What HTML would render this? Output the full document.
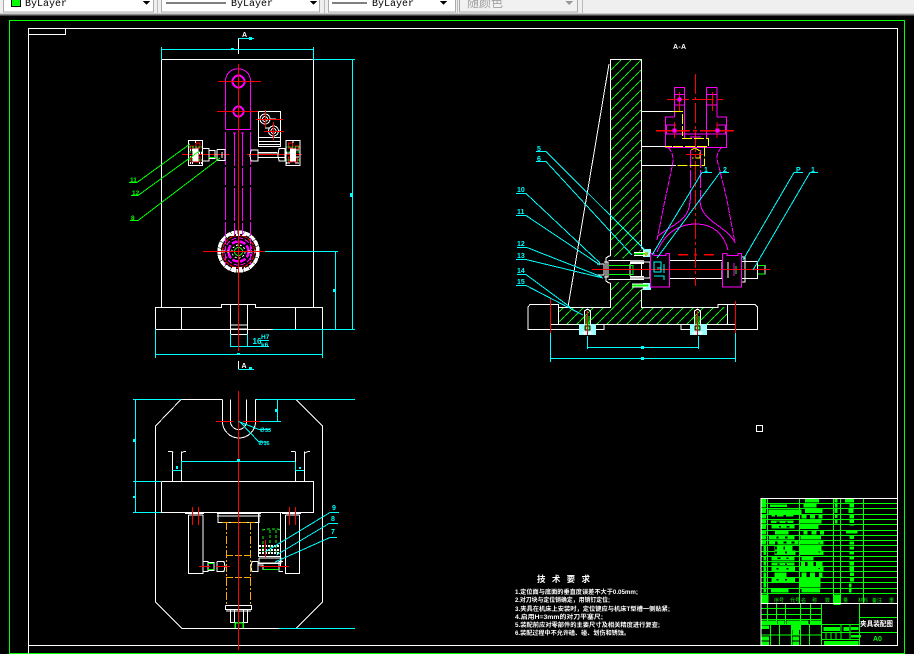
<!DOCTYPE html>
<html><head><meta charset="utf-8"><style>
html,body{margin:0;padding:0;background:#000;width:914px;height:654px;overflow:hidden}
svg{display:block;font-family:"Liberation Sans","Noto Sans CJK SC",sans-serif}
</style></head><body>
<svg width="914" height="654" viewBox="0 0 914 654" shape-rendering="crispEdges" fill="none">
<defs>
<pattern id="h" width="10" height="10" patternUnits="userSpaceOnUse" x="611" y="60"><path d="M0 10L10 0" stroke="#0f0" stroke-width="1" stroke-dasharray="5 1"/></pattern>
<g id="blk"><rect x="188.5" y="140.5" width="14" height="25" stroke="#fff"/>
<path d="M190 146h3v3h-3zM196 143h4v5h-4zM191 158h3v4h-3zM196 157h4v5h-4z" stroke="#f00"/>
<path d="M189 147h13M189 152h13M189 160h13" stroke="#0f0" stroke-dasharray="2 1"/>
<path d="M193 149h5v12h-5z" fill="#fff" stroke="#fff"/><path d="M190 150h3M199 153h3M190 157h3M199 163h3M190 163h3M195 142h2" stroke="#fff" stroke-width="2" stroke-dasharray="1 1"/></g>
</defs>
<!-- toolbar -->
<rect width="914" height="13" fill="#efefef"/>
<rect y="13" width="914" height="1" fill="#c8c8c8"/><rect y="14" width="914" height="1.5" fill="#8a8a8a"/>
<g stroke="#aaa" fill="#fff"><rect x="3.5" y="-2" width="150" height="14"/><rect x="161.5" y="-2" width="158" height="14"/><rect x="328.5" y="-2" width="127" height="14"/></g>
<rect x="459.5" y="-2" width="118" height="14" fill="#f1f1f1" stroke="#aaa"/>
<path d="M157.5 0v13M324.5 0v13M457.5 0v13M582.5 0v13" stroke="#bbb"/>
<rect x="11.5" y="-1" width="9" height="7.5" fill="#0f0" stroke="#000"/>
<path d="M166 3h60M332 3h35" stroke="#000"/>
<g fill="#000" font-family="Liberation Mono" font-size="10"><text x="25" y="6">ByLayer</text><text x="231" y="6">ByLayer</text><text x="372" y="6">ByLayer</text></g>
<text x="467" y="7" font-size="12" fill="#a0a0a0">随颜色</text>
<path d="M143 1h7l-3.500 4zM310 1h7l-3.500 4zM440 1h7l-3.500 4z" fill="#000"/><path d="M565 1h8l-4 4z" fill="#999"/>
<!-- canvas -->
<rect y="15.500" width="914" height="640" fill="#000"/>
<path d="M9.500 654V20.500H904.500V654M9.500 653.500H904.500" stroke="#0f0"/>
<path d="M28.500 654V28.500H897.500V645.500H28.500M28.500 34.500H65.500V28.500" stroke="#fff"/>
<rect x="756.500" y="425.500" width="6" height="6" stroke="#fff"/>

<!-- FRONT VIEW -->
<path d="M161.500 307V59.500H313.500V307M155.500 329.500V307.500H221.500V304.500H255.500V307.500H322.500V329.500H155.500M181.500 307V329M295.500 307V329M230.500 304.500V334.500H247.500V304.500M230.500 325H247.500M230.500 329H247.500" stroke="#fff"/>
<path d="M238.500 38V54M238.500 361V369" stroke="#fff"/>
<g stroke="#0ff">
<path d="M238.500 38.500H254M161.500 47V60M313.500 47V60M161 49.500H314M313 59.500H355M352.500 59V329M273 329.500H355M265 251.500H338M335.500 252V329M155.500 329V358M322.500 329V358M155 354.500H323M230.500 334V347M247.500 334V347M230 346.500H269M238.500 369.500H254"/>
</g>
<g fill="#0ff"><rect x="231" y="48" width="3" height="2"/><rect x="249" y="37" width="3" height="3"/><rect x="350" y="193" width="2" height="4"/><rect x="333" y="289" width="2" height="3"/><rect x="237" y="353" width="3" height="2"/><rect x="249" y="367" width="3" height="3"/></g>
<g fill="#fff" font-size="7" font-weight="bold"><text x="242" y="37">A</text><text x="241.500" y="368">A</text></g>
<g fill="#0ff" font-size="8" font-weight="bold"><text x="252.500" y="344">16</text></g>
<g fill="#0ff" font-size="6.500" font-weight="bold"><text x="261" y="339">H7</text><text x="261" y="347">k6</text></g>
<path d="M260 340.500H269" stroke="#0ff"/>
<!-- link -->
<g stroke="#f0f">
<path d="M225.500 129.500V81.500C225.500 64.500 250.500 64.500 250.500 81.500V129.500H225.500"/>
<path d="M225.500 132V230M234.500 133V230M242.500 133V230M250.500 132V230" stroke-dasharray="33 2 18 2"/>
<path d="M233 133h3M241 133h3" />
<circle cx="238.500" cy="81.500" r="6" stroke-width="2"/><circle cx="238.500" cy="111.500" r="5" stroke-width="2"/>
</g>
<g stroke="#f00"><path d="M238.500 64V351M218 81.500H261M217 111.500H260M182 154.500H229M247 154.500H302M203 251.500H265"/></g>
<!-- small plate -->
<path d="M258.500 111.500H280.500V146.500H258.500V111.500M258.500 137.500H280.500M258.500 141.500H280.500M258.500 144.500H280.500" stroke="#fff"/>
<g stroke="#fff"><circle cx="265" cy="119" r="5" stroke-width="1"/><circle cx="265" cy="119" r="2.500"/><circle cx="273.500" cy="131" r="5"/><circle cx="273.500" cy="131" r="2.500"/><path d="M270 119h6M265 128h5M279 131h2"/></g>
<path d="M256 119.500H283M265.500 110V127M264 131.500H284M273.500 122V140" stroke="#f00"/>
<use href="#blk"/><use href="#blk" transform="translate(488.500 0) scale(-1 1)"/>
<!-- bolts -->
<path d="M202.500 148.500H209V161H202.500M209 150.500H215V158.500H209M215 152V156.500M217 149.500H225V160.500H217V149.500M222 152V158M251 150H258V161H251L250 155.500ZM258 152.500H277M279 148.500H285V161H279L278 155.500Z" stroke="#fff"/>
<path d="M209 157.500H217M262 157.500H279" stroke="#0f0"/>
<path d="M258 157.500H285M258 153H279" stroke="#fff"/>
<!-- round -->
<circle cx="238.500" cy="251.500" r="19.500" stroke="#fff" stroke-width="3.500" stroke-dasharray="6 .5"/>
<circle cx="238.500" cy="251.500" r="16" stroke="#f00" stroke-dasharray="4 1"/>
<circle cx="238.500" cy="251.500" r="13.500" stroke="#f0f" stroke-width="1" stroke-dasharray="5 2"/>
<circle cx="238.500" cy="251.500" r="10" stroke="#f0f" stroke-width="2.500" stroke-dasharray="6 2"/>
<circle cx="238.500" cy="251.500" r="6.500" stroke="#fff" stroke-dasharray="2 2"/>
<circle cx="238.500" cy="251.500" r="4" stroke="#0f0"/>
<path d="M230 235h17M232 268h13M221 251.500h8M248 251.500h8" stroke="#fff" stroke-width="2" stroke-dasharray="4 2"/>
<path d="M225.500 230V265M234.500 230V235M242.500 230V235M250.500 230V265" stroke="#f0f" stroke-dasharray="6 2"/>
<path d="M238.500 224V351M203 251.500H265" stroke="#f00"/>
<!-- green leaders -->
<path d="M129 182.500H137L190 144M131 195.500H138L198 152M130 220.500H138L220 158" stroke="#0f0"/>
<g fill="#0f0" font-size="6.500" font-weight="bold"><text x="130" y="182">11</text><text x="132" y="195">12</text><text x="131" y="220">8</text></g>

<!-- PLAN VIEW -->
<path d="M222.500 399.500H181L155.500 426V602L182 628.500H296L322.500 602V426L296 399.500H255.500M222.500 399.500V421.500M230.500 399.500V421.500M246.500 399.500V421.500M255.500 399.500V421.500" stroke="#fff"/>
<path d="M222.500 421.500A16 16 0 0 0 255.500 421.500M230.500 421.500A8 8 0 0 0 246.500 421.500" stroke="#fff"/>
<path d="M161.500 481.500H313.500V512.500H161.500V481.500M172.500 451.500V481M181.500 451.500V481M295.500 451.500V481M304.500 451.500V481M168 451.500H172L173 453M184 451.500H186M181 453L184 451.500M291 451.500H295M308 451.500H310M305 453L308 451.500" stroke="#fff"/>
<path d="M188.500 515V573.500H203V515M188.500 515H203M285.500 515V573.500H299.500V515M285.500 515H299.500M185 513.500H204M282 513.500H301M218 514V522.500H259V514M217 513.500H261M217 516H261M280.500 513V566M258.500 513V556" stroke="#fff"/>
<path d="M226.500 522V605M250.500 522V605" stroke="#fa0" stroke-dasharray="8 2 2 2"/>
<path d="M222 522.500H255M226 555.500H251M226 577.500H251" stroke="#fa0" stroke-dasharray="7 2"/>
<path d="M225.500 605.500H251.500V609.500H225.500V605.500M226 611H251M230.500 610V622.500H247.500V610M234.500 610V622.500H243.500V610M235.500 628.500H243.500M235.500 622V629M243.500 622V629" stroke="#fff"/>
<path d="M235 622.500V628M243 622.500V628M236 622.500H242" stroke="#0f0" stroke-width="1.500"/>
<!-- plan bolts -->
<path d="M203 561.500H208V571.500H203M208 562.500H214V570.500H208M214 563V570M217 561.500H224L225 566.500L224 571.500H217V561.500M258 561.500H252L251 566.500L252 571.500H258V561.500M258 565H263V570M283 561.500H279V571.500H283M258 556.500H281M258 563.500H281" stroke="#fff"/>
<path d="M208 569.500H214M263 569.500H279M208 563.500H214" stroke="#0f0"/>
<path d="M199 566.500H210M216 566.500H230M260 566.500H289" stroke="#f00"/>
<!-- side detail -->
<path d="M262 530L268 529H278L281 531M263 536V555M270 530V555M276 530V555" stroke="#0f0" stroke-dasharray="3 2"/>
<path d="M259 546H280M259 550H280M259 553H280" stroke="#fff" stroke-width="2" stroke-dasharray="2 1"/>
<path d="M259 558H281V563H259V558" stroke="#fff"/>
<path d="M192.500 507V525M198.500 507V525M289.500 507V525M295.500 507V525M265.500 540V557" stroke="#f00"/>
<path d="M238.500 391V650M216 421.500H233M243 421.500H260" stroke="#f00"/>
<g stroke="#0ff"><path d="M133 399.500H181M257 399.500H355M135.500 399V512M133 481.500H161M133 512.500H161M260 421.500H281M277.500 400V421M279 628.500H355"/>
<path d="M181 461.500H295M172 470.500H181M295 470.500H304M181.500 462V470M295.500 462V470"/>
<path d="M238.500 421.500L259 429.500H270M240 422L259 442H267"/>
<path d="M265 552L330 512.500H339M276.500 555L329 523.500H338M275 562L330 537.500H337"/></g>
<g fill="#0ff"><rect x="176" y="466" width="2" height="3"/><rect x="299" y="467" width="2" height="2"/><rect x="237" y="459" width="3" height="3"/><rect x="133" y="439" width="2" height="3"/><rect x="133" y="496" width="2" height="2"/><rect x="275" y="409" width="2" height="3"/></g>
<g fill="#0ff" font-size="5.500" font-weight="bold"><text x="259.500" y="432">∅33</text><text x="258" y="445">∅16</text></g>
<g fill="#0ff" font-size="7" font-weight="bold"><text x="332" y="510">9</text><text x="331" y="521">8</text><text x="331" y="534">7</text></g>

<!-- SECTION VIEW -->
<polygon points="610.500,59.500 641.500,59.500 641.500,250 630,260 610.500,256" fill="url(#h)"/>
<polygon points="558,307 610.500,307 610.500,283 632,281 641.500,290 641.500,307 727.500,307 727.500,324.500 558,324.500" fill="url(#h)"/>
<path d="M610.500 256V59.500H641.500V248M641.500 290V307.500H718V304.500H755L757.500 307V329.500H681V324.500H604V329.500H528V307L530 304.500H558.500V307.500H610.500V283M558.500 307V324.500M727.500 304.500V324.500M550 324.500H735" stroke="#fff"/>
<path d="M609 64L568 307" stroke="#fff"/>
<path d="M641.500 111.500H676M641.500 146.500H672M641.500 165.500H676" stroke="#fff"/>
<!-- base bolts -->
<rect x="579" y="324" width="17" height="11" fill="#9ff"/><rect x="690" y="324" width="17" height="11" fill="#9ff"/>
<path d="M584.500 335V311L587.500 309L590.500 311V335M694.500 335V311L697.500 309L700.500 311V335M582 333H593M692 333H703" stroke="#fff"/>
<path d="M586 316V330M589 316V330M696 316V330M699 316V330" stroke="#0f0"/>
<path d="M585 326h5v4h-5zM695 326h5v4h-5z" stroke="#000"/>
<path d="M550.500 298V333M735.500 301V333M587.500 311V335M697.500 311V335" stroke="#f00"/>
<g stroke="#0ff"><path d="M550.500 333V362M735.500 333V362M550 358.500H736M587.500 336V349M698.500 336V349M587 347.500H699"/></g>
<path d="M641 346h3v3h-3zM641 357h3v3h-3z" fill="#0ff"/>
<!-- shaft -->
<path d="M610.500 256H609L606 258V281L609 283H610.500M597 264H604V275H597M604 262H608V277H604M608.500 260.500H641.500V279.500H608.500M630 264V276M642 262H650V278H642M641.500 248L644 250H650M641.500 290L644 288H650M669.500 260.500H722M669.500 278.500H722M741.500 261.500H757.500V278.500H741.500M742 257H745V282H742M757.500 265.500H765V274H757.500M722 262V278M728 262V278" stroke="#fff"/>
<rect x="630" y="260" width="14" height="4" fill="#fff"/><rect x="630" y="276" width="14" height="4" fill="#fff"/>
<path d="M630.500 261h13M630.500 278h13" stroke="#000" stroke-dasharray="1 1"/>
<path d="M609 265.500H633V274.500H609M736 266V274M758 265.500H765M758 274H765" stroke="#0f0"/>
<rect x="643" y="249" width="8" height="8" fill="#9ff"/><rect x="643" y="283" width="8" height="7" fill="#9ff"/>
<path d="M634 253.500H648M632 285.500H648" stroke="#0f0" stroke-width="2"/>
<path d="M634 252.500H647M634 255.500H647M632 284H647M632 287H647" stroke="#fff"/>
<rect x="645" y="252" width="2" height="4" fill="#fa0"/>
<!-- red -->
<path d="M592 269.500H770" stroke="#f00"/>
<path d="M678 254.500H688M694 254.500H697M704 254.500H714" stroke="#f00" stroke-width="1.500"/>
<path d="M695.500 74V286" stroke="#f00" stroke-dasharray="20 3 3 3"/>
<!-- magenta con-rod -->
<g stroke="#f0f">
<path d="M674.500 117V87.500H684.500V117M717 117V87.500H706.500V117M674.500 94.500H684.500M674.500 105H684.500M706.500 94.500H717M706.500 105H717"/>
<path d="M674.500 117H665.500V147.500H726.500V117H717M665.500 134H726.500M666.500 125V134M725.500 125V134M666.500 125H676M717 125H725.500M684.500 117V138M706.500 117V138M690 137H701" />
<path d="M668 147C673 153 674 158 672 167L665 200L657 240M722 147C716 153 716 158 719 167L727 200L735 243" stroke-dasharray="6 1"/>
<path d="M690.500 150V200M700.500 150V200" stroke-dasharray="18 2"/>
<path d="M657 237C670 225 690 222 690 200M735 243C728 226 700 222 700 200"/>
<path d="M657 252C665 232 680 224 695.500 224C712 224 723 232 728 250" />
<path d="M650.500 253.500V287H669.500V253.500H666V255.500H654V253.500H650.500M722.500 253.500V287H741.500V253.500H738V255.500H727V253.500H722.500" stroke-width="1.200"/>
</g>
<path d="M654 262V272h7v-10zM654 276h10v4M664 264v9M657 268h4" stroke="#0ff"/>
<path d="M734 263v13" stroke="#f0f"/>
<!-- yellow -->
<path d="M673 111.500H682.500V138.500H708.500V146.500H665M704.500 146.500V165.500H677M691 150L695 148L700 151V158H692" stroke="#ff0" stroke-dasharray="10 2"/>
<path d="M667 99.500H723M679.500 92V111M712.500 92V111" stroke="#f00" stroke-dasharray="22 3"/>
<path d="M656 130.500H737" stroke="#f00" stroke-width="1.500" stroke-dasharray="34 3 4 3"/>
<path d="M674.500 122V138M717 122V138M686 154.500H703" stroke="#f00" stroke-width="1.200"/>
<path d="M678 98h3v3h-3zM673 129h3v3h-3zM716 129h3v3h-3z" fill="#f0f" stroke="#f0f"/>
<!-- section leaders -->
<g stroke="#0ff">
<path d="M536 151.500H546L645 250M536 161.500H546L632 255M516 193.500H526L600 263M516 215.500H526L600 265M517 247.500H527L602 277M516 259.500H526L603 278M517 274.500H526L570 307M516 285.500H526L583 315"/>
<path d="M712 172.500H702L652 255M729 172.500H720L657 258M803 172.500H794L743 260M818 172.500H810L753 270"/>
</g>
<g fill="#0ff" font-size="7" font-weight="bold"><text x="537" y="151">5</text><text x="537" y="161">6</text><text x="517" y="192">10</text><text x="517" y="214">11</text><text x="517" y="246">12</text><text x="517" y="258">13</text><text x="517" y="273">14</text><text x="517" y="284">15</text><text x="704" y="172">1</text><text x="723" y="172">2</text><text x="796" y="172">P</text><text x="811" y="172">1</text></g>
<text x="673" y="49" fill="#fff" font-size="7" textLength="13" font-weight="bold">A-A</text>

<!-- tech notes -->
<g fill="#fff" font-size="8.500" font-weight="bold"><text x="537" y="582" textLength="53">技 术 要 求</text></g>
<g fill="#fff" font-size="6" font-weight="bold">
<text x="515" y="594" textLength="123" lengthAdjust="spacingAndGlyphs">1.定位面与底面的垂直度误差不大于0.05mm;</text>
<text x="515" y="602" textLength="95" lengthAdjust="spacingAndGlyphs">2.对刀块与定位销确定，用销钉定位;</text>
<text x="515" y="611" textLength="155" lengthAdjust="spacingAndGlyphs">3.夹具在机床上安装时，定位键应与机床T型槽一侧贴紧;</text>
<text x="515" y="619" textLength="88" lengthAdjust="spacingAndGlyphs">4.启用H=3mm的对刀平塞尺;</text>
<text x="515" y="627" textLength="145" lengthAdjust="spacingAndGlyphs">5.装配前应对零部件的主要尺寸及相关精度进行复查;</text>
<text x="515" y="635" textLength="115" lengthAdjust="spacingAndGlyphs">6.装配过程中不允许磕、碰、划伤和锈蚀。</text>
</g>

<!-- TITLE BLOCK -->
<g stroke="#0f0">
<path d="M761 503.500H897M761 508.500H897M761 514.500H897M761 519.500H897M761 524.500H897M761 530.500H897M761 535.500H897M761 540.500H897M761 545.500H897M761 551.500H897M761 556.500H897M761 561.500H897M761 566.500H897M761 571.500H897M761 577.500H897M761 582.500H897M761 588.500H897M761 593.500H897"/>
<path d="M767.500 498V603M799.500 498V603M833.500 498V603M840.500 498V603M863.500 498V603"/>
<path d="M761 608.500H821M761 614.500H821M761 619.500H821M761 624.500H859M767.500 603V624M776.500 603V624M785.500 603V624M800.500 603V624M810.500 603V624M770.500 624V645M779.500 624V645M791.500 624V645M800.500 624V645M809.500 624V645M761 635H821M821.500 603V645M859.500 603V645M859 617.500H897M859 632.500H897M821 632.500H859M821 639.500H859M826 632V639M831 632V639M836 632V639M841 625V639M850 625V639"/>
</g>
<g transform="translate(755 495) scale(.33333)" fill="#0f0">
<path d="M20 11h13v13H20zM150 11h42v11h-42zM270 11h27v11h-27zM20 26h13v12H20zM45 29h51v7H45zM145 26h40v12h-40zM283 26h14v11h-14zM20 41h13v13H20zM40 44h100v14H40zM150 41h53v13h-53zM280 41h15v13h-15zM20 57h13v13H20zM50 57h65v8H50zM140 57h15v13h-15zM165 57h15v13h-15zM190 57h13v13h-13zM283 57h14v13h-14zM20 73h13v13H20zM48 76h67v8H48zM133 73h67v13h-67zM283 73h14v11h-14zM20 89h13v13H20zM50 90h68v10H50zM133 89h57v13h-57zM283 89h14v2h-14zM20 105h13v13H20zM60 107h40v11H60zM145 105h13v13h-13zM170 105h15v13h-15zM195 105h12v13h-12zM273 108h35v8h-35zM20 122h13v11H20zM42 122h76v11H42zM137 122h61v11h-61zM283 122h14v10h-14zM20 138h13v11H20zM42 138h88v11H42zM133 138h72v11h-72zM283 140h14v9h-14zM25 153h8v13h-8zM58 153h54v13H58zM135 153h65v13h-65zM283 155h14v9h-14zM25 167h8v13h-8zM58 167h64v13H58zM133 167h72v13h-72zM283 170h14v8h-14zM25 184h8v12h-8zM50 184h68v12H50zM140 184h35v12h-35zM283 184h14v10h-14zM25 200h8v12h-8zM50 202h68v10H50zM138 200h12v14h-12zM158 200h17v14h-17zM183 200h20v14h-20zM283 200h14v12h-14zM25 216h8v12h-8zM50 216h70v12H50zM133 216h72v12h-72zM283 216h14v12h-14zM25 232h8v14h-8zM58 232h37v14H58zM140 232h15v14h-15zM165 232h15v14h-15zM192 232h11v14h-11zM285 232h12v11h-12zM25 249h8v13h-8zM50 249h70v13H50zM135 249h62v13h-62zM285 249h12v11h-12zM25 264h8v14h-8zM135 264h62v14h-62zM282 266h8v11h-8zM25 281h8v11h-8zM48 281h52v11H48zM140 281h55v11h-55zM282 281h8v11h-8zM20 298h20v27H20zM236 298h20v32h-20zM238 10h10v13h-10zM240 26h8v11h-8zM238 41h10v13h-10zM240 57h8v12h-8zM240 73h8v12h-8zM20 377h45v11H20zM68 377h20v11H68zM95 377h65v11H95zM165 377h33v11h-33zM20 392h22v10H20zM20 425h22v12H20zM20 440h22v10H20zM108 390h27v15h-27zM113 405h19v13h-19zM113 425h19v12h-19zM113 440h19v10h-19zM205 396h50v12h-50zM265 396h17v12h-17zM288 396h22v9h-22zM288 420h30v8h-30zM207 438h103v12H207z"/>
</g>
<g transform="translate(755 495) scale(.33333)" fill="#000">
<path d="M60 60h6v5h-6zM85 60h8v5h-8zM65 79h8v5h-8zM92 79h6v5h-6zM72 93h6v4h-6zM95 93h8v4h-8zM65 125h6v5h-6zM90 125h8v5h-8zM60 140h8v8h-8zM85 140h10v5h-10zM110 140h8v5h-8zM60 155h6v8h-6zM85 155h5v8h-5zM60 170h6v5h-6zM90 170h6v5h-6zM68 187h8v5h-8zM95 187h6v5h-6zM68 205h6v5h-6zM90 205h6v5h-6zM65 219h6v5h-6zM95 219h6v5h-6zM65 252h6v5h-6zM90 252h6v5h-6zM190 95h5v3h-5zM190 142h5v3h-5zM190 170h5v3h-5zM190 219h5v3h-5z"/>
</g>
<path d="M761 498.500H897M761 498V645M761 603.500H897" stroke="#fff"/>
<g fill="#0f0" font-size="5"><text x="774" y="602">序号</text><text x="790" y="602">代号</text><text x="801" y="602">名</text><text x="812" y="602">称</text><text x="825" y="602">数</text><text x="843" y="602">量</text><text x="858" y="602">材料</text><text x="872" y="602">备注</text><text x="889" y="602">重</text></g>
<text x="860" y="626" fill="#fff" font-size="7" font-weight="bold" textLength="33" lengthAdjust="spacingAndGlyphs">夹具装配图</text>
<text x="873" y="641" fill="#0f0" font-size="7" font-weight="bold">A0</text>
</svg>
</body></html>
